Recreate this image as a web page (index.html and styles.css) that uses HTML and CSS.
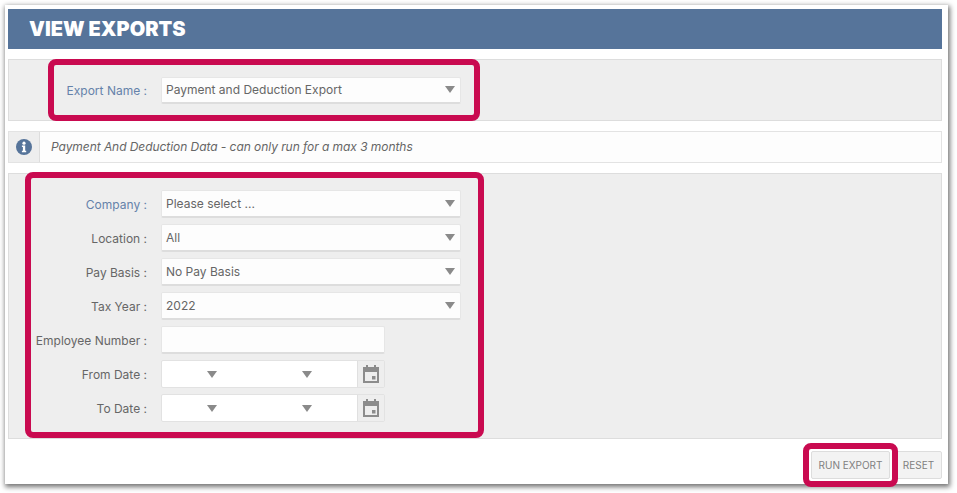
FILE: index.html
```html
<!DOCTYPE html>
<html lang="en">
<head>
<meta charset="utf-8">
<title>View Exports</title>
<link rel="stylesheet" href="styles.css">
</head>
<body>
<main class="card">
  <h1 class="title">VIEW EXPORTS</h1>

  <section class="panel panel-name">
    <div class="row">
      <label class="label label-req">Export Name :</label>
      <div class="select"><span>Payment and Deduction Export</span><i class="caret"></i></div>
    </div>
  </section>

  <section class="info">
    <div class="info-icon">
      <svg width="16" height="16" viewBox="0 0 16 16"><circle cx="8" cy="8" r="8" fill="#56749a"/><circle cx="8" cy="4.2" r="1.6" fill="#fff"/><path d="M5.9 6.6h3.3v5.2h1v1.5H5.9v-1.5h1V8.1h-1z" fill="#fff"/></svg>
    </div>
    <p class="info-text">Payment And Deduction Data - can only run for a max 3 months</p>
  </section>

  <section class="panel panel-form">
    <div class="row">
      <label class="label label-req">Company :</label>
      <div class="select"><span>Please select ...</span><i class="caret"></i></div>
    </div>
    <div class="row">
      <label class="label">Location :</label>
      <div class="select"><span>All</span><i class="caret"></i></div>
    </div>
    <div class="row">
      <label class="label">Pay Basis :</label>
      <div class="select"><span>No Pay Basis</span><i class="caret"></i></div>
    </div>
    <div class="row">
      <label class="label">Tax Year :</label>
      <div class="select"><span>2022</span><i class="caret"></i></div>
    </div>
    <div class="row">
      <label class="label">Employee Number :</label>
      <div class="input"></div>
    </div>
    <div class="row">
      <label class="label">From Date :</label>
      <div class="date">
        <div class="date-fields"><i class="caret"></i><i class="caret"></i></div>
        <div class="date-btn"><svg width="16" height="18" viewBox="0 0 16 18"><path d="M3 0h2v2h6V0h2v2h3v16H0V2h3z M2 7v9h12V7z" fill="#8c8c8c" fill-rule="evenodd"/><rect x="9" y="11" width="3.5" height="3.5" fill="#8c8c8c"/></svg></div>
      </div>
    </div>
    <div class="row">
      <label class="label">To Date :</label>
      <div class="date">
        <div class="date-fields"><i class="caret"></i><i class="caret"></i></div>
        <div class="date-btn"><svg width="16" height="18" viewBox="0 0 16 18"><path d="M3 0h2v2h6V0h2v2h3v16H0V2h3z M2 7v9h12V7z" fill="#8c8c8c" fill-rule="evenodd"/><rect x="9" y="11" width="3.5" height="3.5" fill="#8c8c8c"/></svg></div>
      </div>
    </div>
  </section>

  <div class="actions">
    <button class="btn btn-run" type="button">RUN EXPORT</button>
    <button class="btn btn-reset" type="button">RESET</button>
  </div>
</main>

<div class="mark mark-name"></div>
<div class="mark mark-form"></div>
<div class="mark mark-run"></div>
</body>
</html>
```
FILE: styles.css
```css
* { box-sizing: border-box; }
html, body { margin: 0; padding: 0; }
body {
  width: 957px;
  height: 493px;
  background: #fff;
  overflow: hidden;
  font-family: Inter, "Liberation Sans", sans-serif;
  padding: 5px 0 0 5px;
}
.card {
  width: 943px;
  height: 479px;
  background: #fff;
  padding: 4px 6px 0 3px;
  box-shadow: 1px 2px 5px 1px rgba(0, 0, 0, .55);
}
.title {
  margin: 0;
  height: 40px;
  line-height: 40px;
  padding-left: 21px;
  background: #56749a;
  color: #fff;
  font-size: 20px;
  font-weight: 900;
}
.panel {
  background: #eee;
  border: 1px solid #ddd;
}
.panel-name {
  height: 62px;
  margin-top: 10px;
  padding-top: 17px;
}
.panel-form {
  height: 266px;
  margin-top: 10px;
  padding-top: 16px;
  display: flex;
  flex-direction: column;
  gap: 6px;
}
.row {
  display: flex;
  align-items: center;
  gap: 14px;
  height: 27px;
}
.panel-form .row { height: 28px; }
.label {
  width: 138px;
  text-align: right;
  font-size: 12px;
  color: #666;
}
.panel-form .label { padding-top: 1px; }
.label-req { color: #6582aa; }
.select, .input {
  height: 100%;
  background: #fdfdfd;
  border: 1px solid #e6e6e6;
  border-bottom: 2px solid #ddd;
  border-radius: 2px;
}
.select {
  width: 300px;
  display: flex;
  align-items: center;
  justify-content: space-between;
  padding: 0 5px 1px 4px;
  font-size: 12px;
  color: #666;
}
.input { width: 224px; }
.caret {
  display: block;
  width: 0;
  height: 0;
  border-left: 5px solid transparent;
  border-right: 5px solid transparent;
  border-top: 7px solid #8a8a8a;
}
.date {
  width: 224px;
  height: 28px;
  display: flex;
  background: #fff;
  border: 1px solid #e2e2e2;
  border-radius: 2px;
}
.date-fields {
  flex: 1;
  display: flex;
  align-items: center;
  padding: 0 45px 0 45px;
  justify-content: space-between;
}
.date-btn {
  width: 27px;
  background: #eee;
  border-left: 1px solid #e0e0e0;
  display: flex;
  align-items: center;
  justify-content: center;
}
.info {
  height: 32px;
  margin-top: 10px;
  display: flex;
  background: #fdfdfd;
  border: 1px solid #e3e3e3;
}
.info-icon {
  width: 31px;
  background: #eee;
  border-right: 1px solid #ddd;
  display: flex;
  align-items: center;
  justify-content: center;
}
.info-text {
  margin: 0;
  padding: 0 0 2px 11px;
  align-self: center;
  font-size: 12px;
  font-style: italic;
  letter-spacing: -.06px;
  color: #666;
}
.actions {
  display: flex;
  justify-content: flex-end;
  gap: 3px;
  margin-top: 12px;
}
.btn {
  height: 28px;
  padding: 0;
  background: #f3f3f3;
  border: 1px solid #ddd;
  border-radius: 2px;
  font-family: inherit;
  font-size: 10px;
  color: #808080;
}
.btn-run { width: 79px; }
.btn-reset { width: 49px; padding-left: 2px; }
.mark {
  position: absolute;
  border: 6px solid #c90a50;
  border-radius: 8px;
}
.mark-name { left: 48px; top: 59px; width: 432px; height: 62px; }
.mark-form { left: 25px; top: 172px; width: 459px; height: 266px; }
.mark-run { left: 803px; top: 443px; width: 95px; height: 44px; }
```
